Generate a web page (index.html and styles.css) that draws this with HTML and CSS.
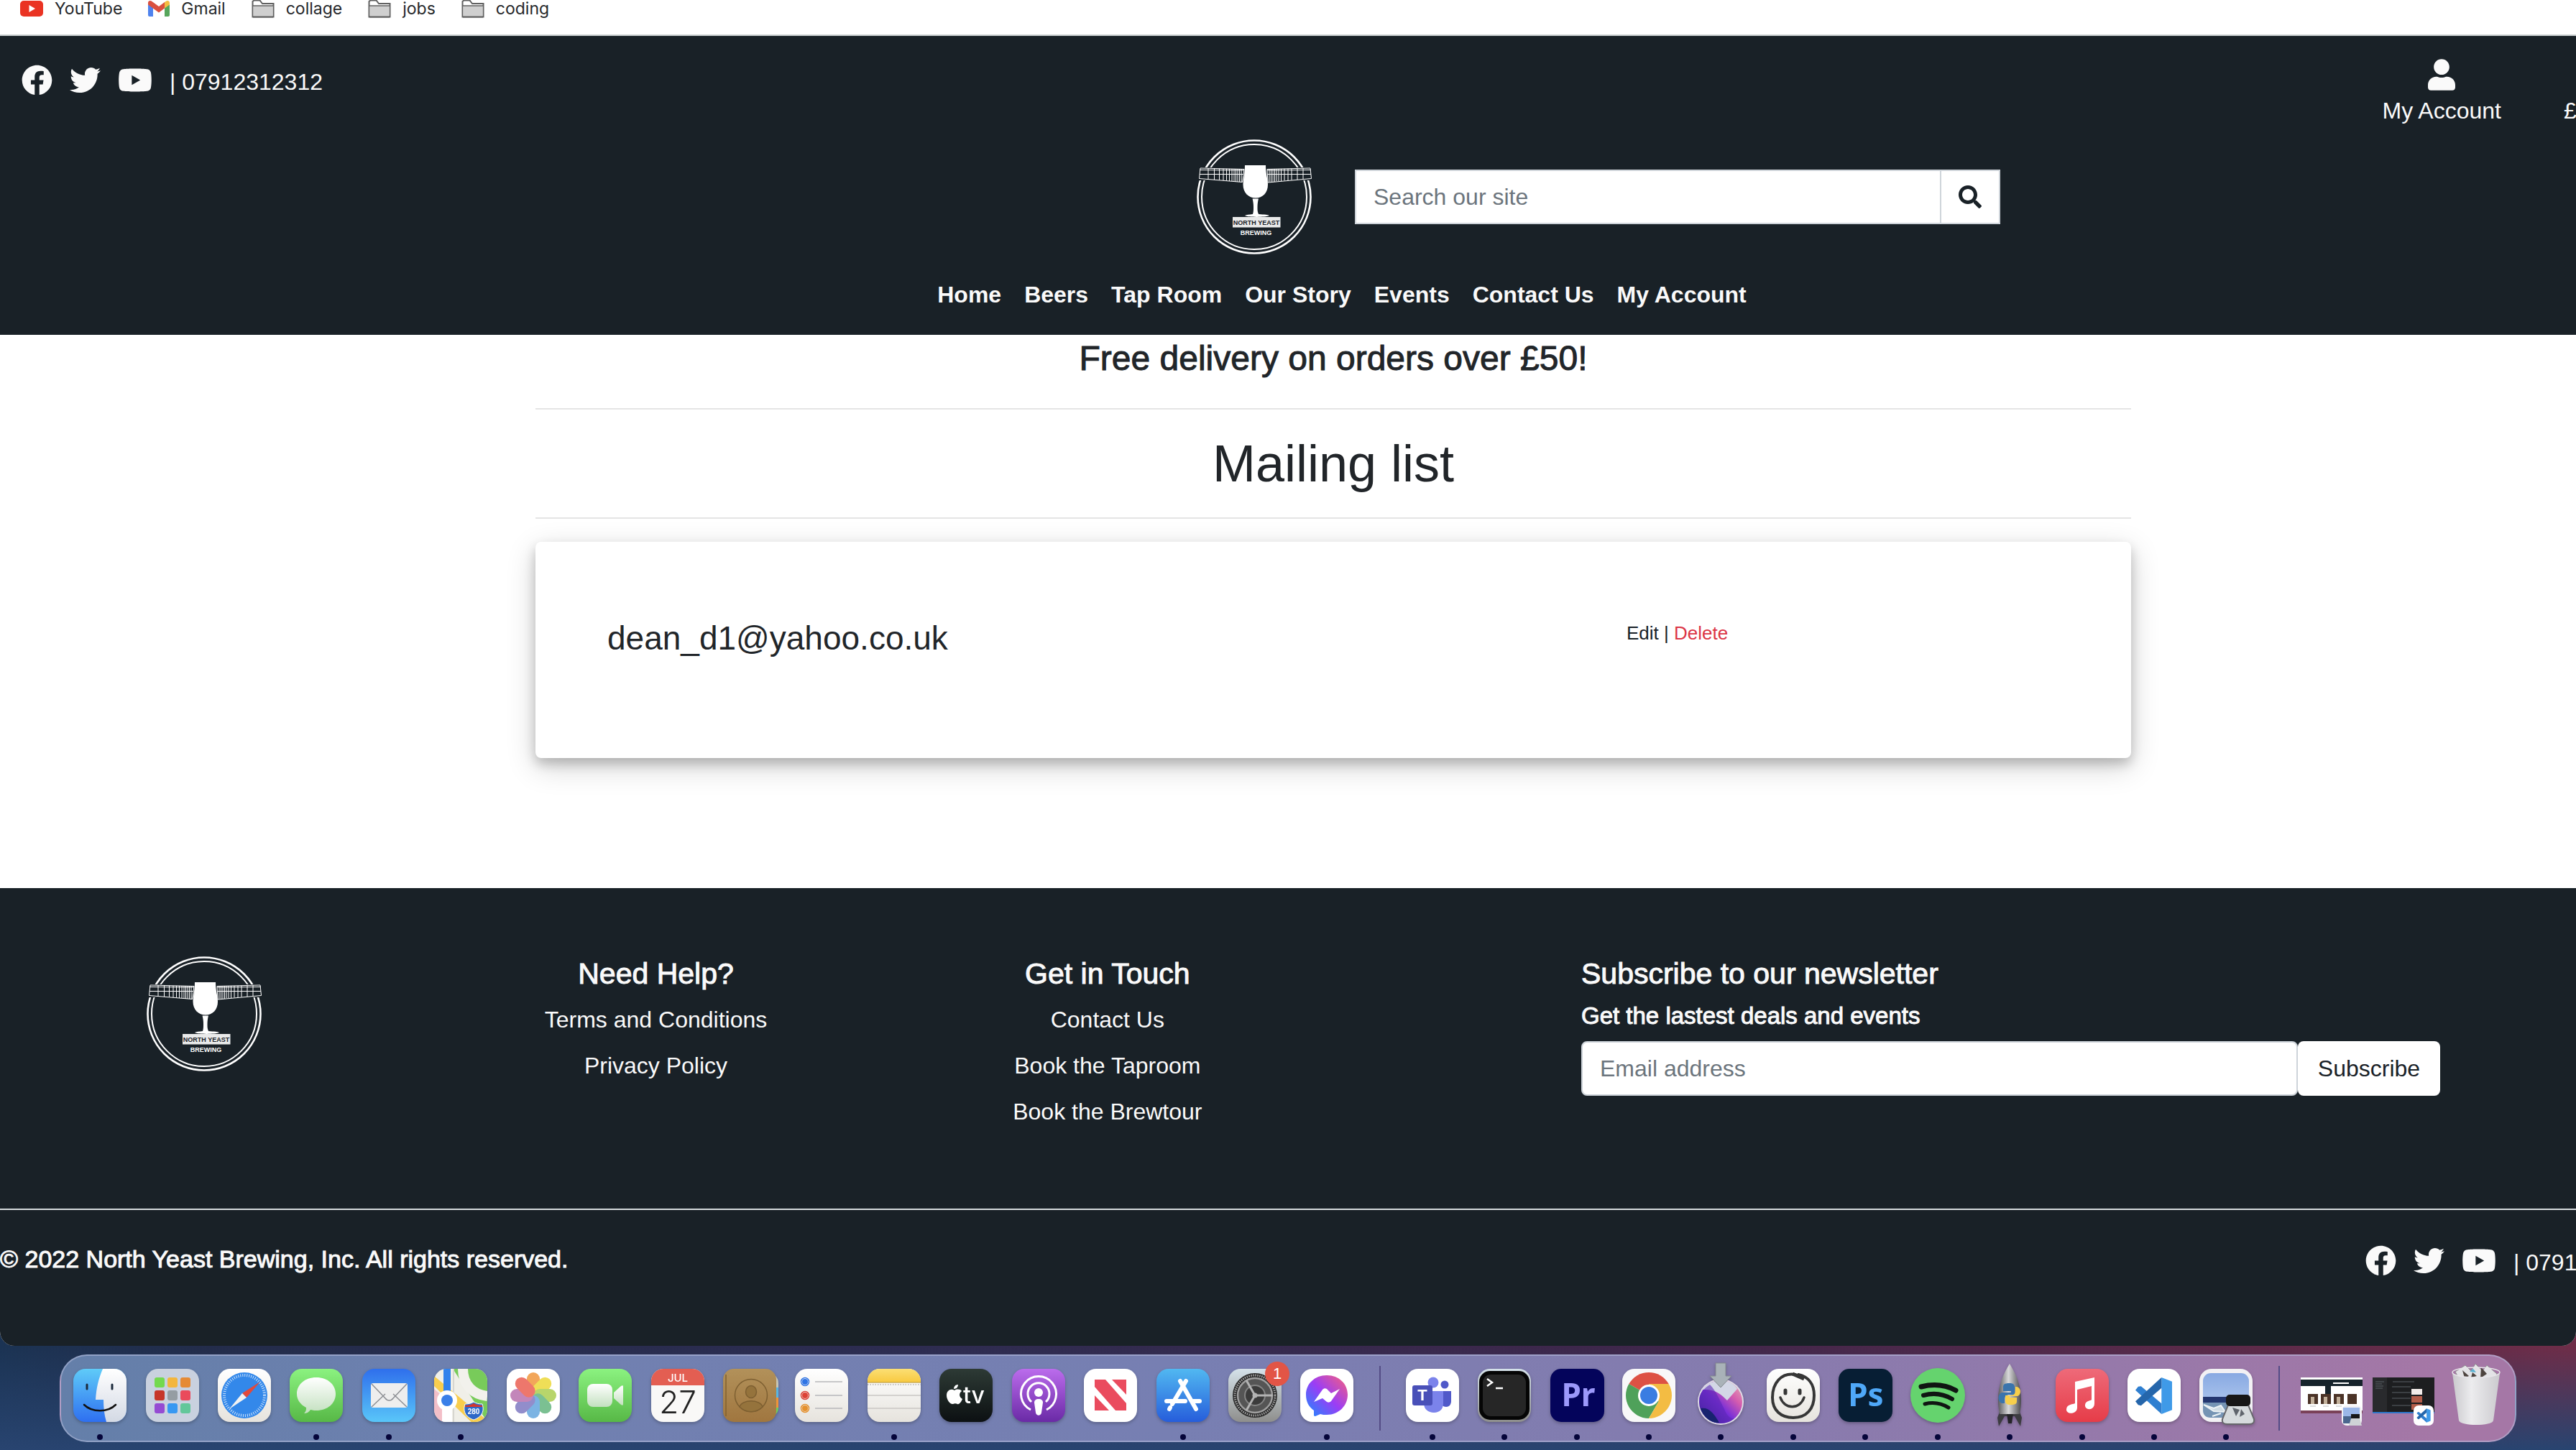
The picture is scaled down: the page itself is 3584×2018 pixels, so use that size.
FILE: index.html
```html
<!DOCTYPE html>
<html lang="en">
<head>
<meta charset="utf-8">
<title>Mailing list - North Yeast Brewing</title>
<link rel="stylesheet" href="styles.css">
</head>
<body>
<svg class="defs" aria-hidden="true">
  <defs>
    <linearGradient id="g-finder" x1="0" y1="0" x2="0" y2="1"><stop offset="0" stop-color="#5fcbf8"/><stop offset="1" stop-color="#2e6ff0"/></linearGradient>
    <linearGradient id="g-light" x1="0" y1="0" x2="0" y2="1"><stop offset="0" stop-color="#ffffff"/><stop offset="1" stop-color="#d3d9e4"/></linearGradient>
    <linearGradient id="g-green" x1="0" y1="0" x2="0" y2="1"><stop offset="0" stop-color="#8bf280"/><stop offset="1" stop-color="#57b846"/></linearGradient>
    <linearGradient id="g-bubble" x1="0" y1="0" x2="0" y2="1"><stop offset="0" stop-color="#ffffff"/><stop offset="1" stop-color="#c3e0bf"/></linearGradient>
    <linearGradient id="g-mail" x1="0" y1="0" x2="0" y2="1"><stop offset="0" stop-color="#2f6fec"/><stop offset="1" stop-color="#59c6f9"/></linearGradient>
    <linearGradient id="g-cream" x1="0" y1="0" x2="0" y2="1"><stop offset="0" stop-color="#ffffff"/><stop offset="1" stop-color="#e6e3dd"/></linearGradient>
    <linearGradient id="g-tan" x1="0" y1="0" x2="0" y2="1"><stop offset="0" stop-color="#b2915a"/><stop offset="1" stop-color="#a0763f"/></linearGradient>
    <linearGradient id="g-yellow" x1="0" y1="0" x2="0" y2="1"><stop offset="0" stop-color="#fbdf74"/><stop offset="1" stop-color="#f8c940"/></linearGradient>
    <linearGradient id="g-tv" x1="0" y1="0" x2="0" y2="1"><stop offset="0" stop-color="#2d3a35"/><stop offset="1" stop-color="#0c1012"/></linearGradient>
    <linearGradient id="g-pod" x1="0" y1="0" x2="0" y2="1"><stop offset="0" stop-color="#bb6cec"/><stop offset="1" stop-color="#6a2aa6"/></linearGradient>
    <linearGradient id="g-store" x1="0" y1="0" x2="0" y2="1"><stop offset="0" stop-color="#51b8f1"/><stop offset="1" stop-color="#265ddb"/></linearGradient>
    <linearGradient id="g-gear" x1="0" y1="0" x2="0" y2="1"><stop offset="0" stop-color="#d5e2ea"/><stop offset="1" stop-color="#8e8e8c"/></linearGradient>
    <linearGradient id="g-msgr" x1="1" y1="0" x2="0" y2="1"><stop offset="0" stop-color="#f9617a"/><stop offset=".5" stop-color="#9b3df5"/><stop offset="1" stop-color="#1a8cff"/></linearGradient>
    <linearGradient id="g-music" x1="0" y1="0" x2="0" y2="1"><stop offset="0" stop-color="#ee6a79"/><stop offset="1" stop-color="#e63c48"/></linearGradient>
    <linearGradient id="g-disc" x1="0" y1="1" x2="1" y2="0"><stop offset="0" stop-color="#1b1e78"/><stop offset=".45" stop-color="#7a2fd8"/><stop offset=".7" stop-color="#d55cae"/><stop offset="1" stop-color="#e7b6b4"/></linearGradient>
    <linearGradient id="g-steel" x1="0" y1="0" x2="1" y2="0"><stop offset="0" stop-color="#5a5a5e"/><stop offset=".45" stop-color="#d9d9da"/><stop offset="1" stop-color="#4a4a4e"/></linearGradient>
    <linearGradient id="g-sky" x1="0" y1="0" x2="0" y2="1"><stop offset="0" stop-color="#88a9e2"/><stop offset="1" stop-color="#bcd2f2"/></linearGradient>
    <linearGradient id="g-bin" x1="0" y1="0" x2="1" y2="0"><stop offset="0" stop-color="#c9c8cc"/><stop offset=".4" stop-color="#ececee"/><stop offset="1" stop-color="#cbcace"/></linearGradient>
    <clipPath id="tile"><rect width="74" height="74" rx="17"/></clipPath>
    <symbol id="i-facebook" viewBox="0 0 512 512"><path d="M504 256C504 119 393 8 256 8S8 119 8 256c0 123.78 90.69 226.38 209.25 245V327.69h-63V256h63v-54.64c0-62.15 37-96.48 93.67-96.48 27.14 0 55.52 4.84 55.52 4.84v61h-31.28c-30.8 0-40.41 19.12-40.41 38.73V256h68.78l-11 71.69h-57.78V501C413.31 482.38 504 379.78 504 256z"/></symbol>
    <symbol id="i-twitter" viewBox="0 0 512 512"><path d="M459.37 151.716c.325 4.548.325 9.097.325 13.645 0 138.72-105.583 298.558-298.558 298.558-59.452 0-114.68-17.219-161.137-47.106 8.447.974 16.568 1.299 25.34 1.299 49.055 0 94.213-16.568 130.274-44.832-46.132-.975-84.792-31.188-98.112-72.772 6.498.974 12.995 1.624 19.818 1.624 9.421 0 18.843-1.3 27.614-3.573-48.081-9.747-84.143-51.98-84.143-102.985v-1.299c13.969 7.797 30.214 12.67 47.431 13.319-28.264-18.843-46.781-51.005-46.781-87.391 0-19.492 5.197-37.36 14.294-52.954 51.655 63.675 129.3 105.258 216.365 109.807-1.624-7.797-2.599-15.918-2.599-24.04 0-57.828 46.782-104.934 104.934-104.934 30.213 0 57.502 12.67 76.67 33.137 23.715-4.548 46.456-13.32 66.599-25.34-7.798 24.366-24.366 44.833-46.132 57.827 21.117-2.273 41.584-8.122 60.426-16.243-14.292 20.791-32.161 39.308-52.628 54.253z"/></symbol>
    <symbol id="i-youtube" viewBox="0 0 576 512"><path d="M549.655 124.083c-6.281-23.65-24.787-42.276-48.284-48.597C458.781 64 288 64 288 64S117.22 64 74.629 75.486c-23.497 6.322-42.003 24.947-48.284 48.597-11.412 42.867-11.412 132.305-11.412 132.305s0 89.438 11.412 132.305c6.281 23.65 24.787 41.5 48.284 47.821C117.22 448 288 448 288 448s170.78 0 213.371-11.486c23.497-6.321 42.003-24.171 48.284-47.821 11.412-42.867 11.412-132.305 11.412-132.305s0-89.438-11.412-132.305zm-317.51 213.508V175.185l142.739 81.205-142.739 81.201z"/></symbol>
    <symbol id="i-folder" viewBox="0 0 32 26"><path d="M1.500 24.500V3l2-1.500h8L15 6h15.500v18.500z" fill="#fff" stroke="#606060" stroke-width="2"/><path d="M2.500 9h27v15h-27z" fill="#cfcfcf"/><path d="M1 9h30" stroke="#606060" stroke-width="1.500"/><path d="M2 24.500h28" stroke="#606060" stroke-width="2"/></symbol>
    <symbol id="i-code" viewBox="0 0 54 54"><path d="M38 1 53 7v40l-15 6z" fill="#3f9ae8"/><path d="M38 1v52L1 19l4-5 4-.500L38 38z" fill="#2f7fd0"/><path d="M38 1v15L9 41l-4-1-4-5z" fill="#2566ab"/></symbol>
    <symbol id="logo" viewBox="0 0 160 160">
      <g fill="none" stroke="#fff"><circle cx="80" cy="80" r="78.500" stroke-width="2.600"/><circle cx="80" cy="80" r="73" stroke-width="2"/></g>
      <path d="M0 39h160v18H0z" fill="#192127"/>
      <g fill="none" stroke="#fff" stroke-width="1">
        <path d="M5 40 66 41.500 63.500 59.500 3.500 54.500zM4 42.500l62 .500M4 48.500h61M16 40v15M24.500 40v16M31.500 41v15.500M37 41v16M41.500 41v16M45.500 41v17M49 41v17M52 41v17M54.500 41v18M57 41v18M59.500 41v18M62 41v18"/>
        <path d="M158 40 98 41.500 99 60 159.500 54.500zM159 42.500l-61 .500M159 48.500H98M148 40v15M140 40v16M132 41v15.500M127 41v16M122 41v16M117.500 41v17M114 41v17M111 41v17M108.500 41v18M106 41v18M103.500 41v18M101 41v18"/>
      </g>
      <path d="M67 36h29c0 12 3 19 3 27 0 11-7 18.500-17 18.500S64.500 74 64.500 63c0-8 2.500-15 2.500-27z" fill="#fff"/>
      <path d="M77.500 82.500h8.500c-1 4-1.500 7-1.500 12 0 4 0 6 1.500 9.500 8 .5 14 1 15 2-6 2.500-29 2.500-34 0 2-1 6-1.500 11-2 1-3 1-6 1-9.500 0-5-.5-8-1.500-12z" fill="#fff"/>
      <path d="M50 108h66.500v14.500H50z" fill="#e9eaea"/>
      <text class="logo-line" x="83" y="118.500" fill="#192127">NORTH YEAST</text>
      <text class="logo-line" x="82.500" y="133" fill="#fff">BREWING</text>
    </symbol>
  </defs>
</svg>

<div class="window">
  <nav class="bookmarks" aria-label="Bookmarks">
    <a href="#"><svg width="32" height="22" viewBox="0 0 32 22"><rect width="32" height="22" rx="5" fill="#ea3323"/><path d="M12.500 6v10l8.500-5z" fill="#fff"/></svg>YouTube</a>
    <a href="#"><svg width="30" height="22" viewBox="0 0 30 22"><path d="M0 3v17a2 2 0 0 0 2 2h5V8z" fill="#4f83ee"/><path d="M30 3v17a2 2 0 0 1-2 2h-5V8z" fill="#57a65c"/><path d="M30 3c0-3-3-4-5.500-2L23 2v8.500l7-5z" fill="#f3bd42"/><path d="M0 3c0-3 3-4 5.500-2L15 8l8-6v8.500L15 16.500 0 5.500z" fill="#d9503f"/></svg>Gmail</a>
    <a href="#"><svg width="32" height="26"><use href="#i-folder"/></svg>collage</a>
    <a href="#"><svg width="32" height="26"><use href="#i-folder"/></svg>jobs</a>
    <a href="#"><svg width="32" height="26"><use href="#i-folder"/></svg>coding</a>
  </nav>

  <div class="page">
    <header class="site-header">
      <div class="top-row">
        <div class="social">
          <a href="#" aria-label="Facebook"><svg width="43" height="43"><use href="#i-facebook"/></svg></a>
          <a href="#" aria-label="Twitter"><svg width="43" height="43"><use href="#i-twitter"/></svg></a>
          <a href="#" aria-label="YouTube"><svg width="48" height="43"><use href="#i-youtube"/></svg></a>
          <span>| 07912312312</span>
        </div>
        <div class="account">
          <a href="#"><svg width="38" height="44" viewBox="0 0 448 512"><path d="M224 256c70.7 0 128-57.3 128-128S294.7 0 224 0 96 57.3 96 128s57.3 128 128 128zm89.6 32h-16.7c-22.2 10.2-46.9 16-72.9 16s-50.6-5.800-72.9-16h-16.7C60.2 288 0 348.2 0 422.4V464c0 26.5 21.5 48 48 48h352c26.5 0 48-21.5 48-48v-41.600c0-74.200-60.200-134.400-134.400-134.400z"/></svg>My Account</a>
          <a href="#">£0.00</a>
        </div>
      </div>
      <div class="brand-row">
        <a class="brand" href="#" aria-label="North Yeast Brewing"><svg width="160" height="160"><use href="#logo"/></svg></a>
        <form class="search">
          <input type="search" placeholder="Search our site" aria-label="Search our site">
          <button type="submit" aria-label="Search"><svg width="32" height="32" viewBox="0 0 512 512"><path d="M505 442.700L405.300 343c-4.500-4.500-10.600-7-17-7H372c27.600-35.300 44-79.700 44-128C416 93.100 322.900 0 208 0S0 93.100 0 208s93.100 208 208 208c48.300 0 92.700-16.400 128-44v16.300c0 6.400 2.500 12.500 7 17l99.700 99.700c9.400 9.400 24.600 9.400 33.900 0l28.300-28.300c9.400-9.400 9.400-24.600.1-34zM208 336c-70.700 0-128-57.200-128-128 0-70.700 57.200-128 128-128 70.700 0 128 57.200 128 128 0 70.700-57.200 128-128 128z"/></svg></button>
        </form>
      </div>
      <nav class="main-nav" aria-label="Main">
        <a href="#">Home</a><a href="#">Beers</a><a href="#">Tap Room</a><a href="#">Our Story</a><a href="#">Events</a><a href="#">Contact Us</a><a href="#">My Account</a>
      </nav>
    </header>

    <main class="content">
      <p class="delivery">Free delivery on orders over £50!</p>
      <hr>
      <h1>Mailing list</h1>
      <hr>
      <article class="card">
        <h2>dean_d1@yahoo.co.uk</h2>
        <p class="actions"><a href="#">Edit</a> | <a class="danger" href="#">Delete</a></p>
      </article>
    </main>

    <footer class="site-footer">
      <div class="footer-row">
        <div class="footer-col"><svg width="160" height="160" role="img" aria-label="North Yeast Brewing"><use href="#logo"/></svg></div>
        <div class="footer-col">
          <h3>Need Help?</h3>
          <a href="#">Terms and Conditions</a>
          <a href="#">Privacy Policy</a>
        </div>
        <div class="footer-col">
          <h3>Get in Touch</h3>
          <a href="#">Contact Us</a>
          <a href="#">Book the Taproom</a>
          <a href="#">Book the Brewtour</a>
        </div>
        <form class="newsletter">
          <h3>Subscribe to our newsletter</h3>
          <label for="email">Get the lastest deals and events</label>
          <div class="field"><input id="email" type="email" placeholder="Email address"><button type="submit">Subscribe</button></div>
        </form>
      </div>
      <div class="legal">
        <p>© 2022 North Yeast Brewing, Inc. All rights reserved.</p>
        <div class="social">
          <a href="#" aria-label="Facebook"><svg width="43" height="43"><use href="#i-facebook"/></svg></a>
          <a href="#" aria-label="Twitter"><svg width="43" height="43"><use href="#i-twitter"/></svg></a>
          <a href="#" aria-label="YouTube"><svg width="48" height="43"><use href="#i-youtube"/></svg></a>
          <span>| 07912312312</span>
        </div>
      </div>
    </footer>
  </div>
</div>

<nav class="dock" aria-label="Dock">
  <button class="app open" aria-label="Finder"><svg viewBox="0 0 74 74"><g clip-path="url(#tile)"><rect width="74" height="74" fill="url(#g-finder)"/><path d="M41 0c-6 14-9 27-10 43h11c0 11 1 21 4 31h28V0z" fill="url(#g-light)"/></g><path d="M19 22v6M54 22v6" stroke="#1c2b3c" stroke-width="3" stroke-linecap="round"/><path d="M15 50c11 11 33 11 44 0" fill="none" stroke="#111" stroke-width="2.500" stroke-linecap="round"/></svg></button>
  <button class="app" aria-label="Launchpad"><svg viewBox="0 0 74 74"><rect width="74" height="74" rx="17" fill="#c9d1df"/><rect x="12" y="12" width="14" height="14" rx="3" fill="#73d94f"/><rect x="30" y="12" width="14" height="14" rx="3" fill="#f3b63e"/><rect x="48" y="12" width="14" height="14" rx="3" fill="#e58a35"/><rect x="12" y="30" width="14" height="14" rx="3" fill="#c63529"/><rect x="30" y="30" width="14" height="14" rx="3" fill="#959da3"/><rect x="48" y="30" width="14" height="14" rx="3" fill="#ea4b5c"/><rect x="12" y="48" width="14" height="14" rx="3" fill="#954bd3"/><rect x="30" y="48" width="14" height="14" rx="3" fill="#3798f2"/><rect x="48" y="48" width="14" height="14" rx="3" fill="#62c79a"/></svg></button>
  <button class="app" aria-label="Safari"><svg viewBox="0 0 74 74"><rect width="74" height="74" rx="17" fill="url(#g-cream)"/><circle cx="37" cy="37" r="32" fill="#3388ea"/><circle cx="37" cy="37" r="28" fill="none" stroke="#cfe4fb" stroke-width="4" stroke-dasharray="1 2"/><path d="M59 18 40 40l-6-6z" fill="#e2493b"/><path d="M16 56l18-22 6 6z" fill="#f2f2f2"/></svg></button>
  <button class="app open" aria-label="Messages"><svg viewBox="0 0 74 74"><rect width="74" height="74" rx="17" fill="url(#g-green)"/><path d="M37 12c16 0 27 10 27 23S53 58 37 58c-3 0-6-.5-8-1-2 3-5 5-9 5 3-3 3-5 3-8-8-4-13-11-13-19 0-13 11-23 27-23z" fill="url(#g-bubble)"/></svg></button>
  <button class="app open" aria-label="Mail"><svg viewBox="0 0 74 74"><rect width="74" height="74" rx="17" fill="url(#g-mail)"/><rect x="12" y="20" width="51" height="34" rx="3" fill="#eee"/><path d="M13 53l19-18M62 53 43 35M13 21l19 20c3 4 8 4 11 0l19-20" fill="none" stroke="#8d8f94" stroke-width="1.500"/></svg></button>
  <button class="app open" aria-label="Maps"><svg viewBox="0 0 74 74"><g clip-path="url(#tile)"><rect width="74" height="74" fill="#f0efe8"/><path d="M26 0h48v74z" fill="#78cb5a"/><path d="M0 10 74 72v12H62L0 24z" fill="#f8cd4d"/><path d="M0 28 14 40v34H0z" fill="#f3bfc8"/><path d="M40 0c0 22 14 36 34 38" fill="none" stroke="#f2f1ec" stroke-width="14"/><path d="M27 0v74" stroke="#d7d6d0" stroke-width="2"/><path d="M18 0v40" stroke="#3182ec" stroke-width="10"/><path d="M18 50v24" stroke="#fff" stroke-width="14"/><circle cx="18" cy="44" r="14" fill="#fff"/><circle cx="18" cy="44" r="8" fill="#3a7fe8"/><path d="M43 49c5 0 9-1 12-3 3 2 7 3 12 3 4 12-3 19-12 22-9-3-16-10-12-22z" fill="#2c68c8" stroke="#fff"/><path d="M43 51c5 0 9-1 12-3 3 2 7 3 12 3v2H43z" fill="#d4362e"/></g><text class="t-shield" x="55" y="63">280</text></svg></button>
  <button class="app" aria-label="Photos"><svg viewBox="0 0 74 74"><rect width="74" height="74" rx="17" fill="#fff"/><g opacity=".82"><rect x="28" y="5" width="18" height="32" rx="9" fill="#f09336"/><rect x="28" y="5" width="18" height="32" rx="9" fill="#ecd733" transform="rotate(45 37 37)"/><rect x="28" y="5" width="18" height="32" rx="9" fill="#a9cd4b" transform="rotate(90 37 37)"/><rect x="28" y="5" width="18" height="32" rx="9" fill="#5fb37b" transform="rotate(135 37 37)"/><rect x="28" y="5" width="18" height="32" rx="9" fill="#5fa3dd" transform="rotate(180 37 37)"/><rect x="28" y="5" width="18" height="32" rx="9" fill="#7b75c0" transform="rotate(225 37 37)"/><rect x="28" y="5" width="18" height="32" rx="9" fill="#b76cab" transform="rotate(270 37 37)"/><rect x="28" y="5" width="18" height="32" rx="9" fill="#ea5a4d" transform="rotate(315 37 37)"/></g></svg></button>
  <button class="app" aria-label="FaceTime"><svg viewBox="0 0 74 74"><rect width="74" height="74" rx="17" fill="url(#g-green)"/><rect x="12" y="21" width="35" height="32" rx="8" fill="url(#g-bubble)"/><path d="M49 33l10-9c2-1 3-1 3 1v24c0 2-1 2-3 1l-10-9z" fill="url(#g-bubble)"/></svg></button>
  <button class="app" aria-label="Calendar"><svg viewBox="0 0 74 74"><g clip-path="url(#tile)"><rect width="74" height="74" fill="#f9f8f7"/><rect width="74" height="23" fill="#e35e52"/></g><text class="t-month" x="37" y="18">JUL</text><text class="t-day" x="37" y="62">27</text></svg></button>
  <button class="app" aria-label="Contacts"><svg viewBox="0 0 74 74"><path d="M70 10h3q4 4 4 10v8h-7z" fill="#c7c5b5"/><path d="M70 26h7v14h-7z" fill="#58b5e2"/><path d="M70 40h7v14h-7z" fill="#ee9439"/><path d="M70 54h7q0 8-7 11z" fill="#6fcf5d"/><rect width="74" height="74" rx="15" fill="url(#g-tan)"/><path d="M4 8v58" stroke="#80602f" stroke-width="1.500"/><g fill="#95733c" stroke="#7d5f31" stroke-width="1.500"><circle cx="39" cy="37" r="22.500" fill="none"/><ellipse cx="39" cy="32" rx="7.500" ry="8.500"/><path d="M23 53c3-11 29-11 32 0-9 9-23 9-32 0z"/></g></svg></button>
  <button class="app" aria-label="Reminders"><svg viewBox="0 0 74 74"><rect width="74" height="74" rx="17" fill="url(#g-cream)"/><path d="M28 18h38M28 37h38M28 55h38" stroke="#b6b6ba" stroke-width="1.500"/><g stroke-width="1.500" fill="none"><circle cx="14" cy="18" r="5.500" stroke="#2f74e4"/><circle cx="14" cy="37" r="5.500" stroke="#dc4237"/><circle cx="14" cy="55" r="5.500" stroke="#e4912f"/></g><circle cx="14" cy="18" r="4" fill="#2f74e4"/><circle cx="14" cy="37" r="4" fill="#dc4237"/><circle cx="14" cy="55" r="4" fill="#e4912f"/></svg></button>
  <button class="app open" aria-label="Notes"><svg viewBox="0 0 74 74"><g clip-path="url(#tile)"><rect width="74" height="74" fill="url(#g-cream)"/><rect width="74" height="19" fill="url(#g-yellow)"/><path d="M0 19h74" stroke="#b79535"/><path d="M0 22h74" stroke="#b3b0ab" stroke-width="1.500" stroke-dasharray="1.500 2"/><path d="M0 37h74M0 55h74" stroke="#c9c6c3" stroke-width="1.500"/></g></svg></button>
  <button class="app" aria-label="Apple TV"><svg viewBox="0 0 74 74"><rect width="74" height="74" rx="17" fill="url(#g-tv)"/><path d="M21 30c3-2 8-2 10 1-4 3-4 8 1 11-2 5-5 8-7 7-2-1-4-1-6 0-4 1-9-6-9-12 0-7 6-10 11-7zM20 28c0-3 2-6 6-6 0 3-2 6-6 6z" fill="#fff"/><text class="t-tv" x="48" y="48">tv</text></svg></button>
  <button class="app" aria-label="Podcasts"><svg viewBox="0 0 74 74"><rect width="74" height="74" rx="17" fill="url(#g-pod)"/><g fill="none" stroke="#fff" stroke-width="3"><path d="M26 57a24.500 24.500 0 1 1 22 0"/><path d="M27 46a15 15 0 1 1 20 0"/></g><circle cx="37" cy="33" r="6" fill="#fff"/><path d="M37 42c4 0 6 2 6 5l-2 14c-1 5-7 5-8 0l-2-14c0-3 2-5 6-5z" fill="#fff"/></svg></button>
  <button class="app" aria-label="News"><svg viewBox="0 0 74 74"><rect width="74" height="74" rx="17" fill="#fff"/><path d="M15 15h15l29 33v10H44L15 25z" fill="#ea4b5e"/><path d="M39 15h20v21zM15 37v21h20z" fill="#ea4b5e"/></svg></button>
  <button class="app open" aria-label="App Store"><svg viewBox="0 0 74 74"><rect width="74" height="74" rx="17" fill="url(#g-store)"/><g stroke="#fff" stroke-width="6" stroke-linecap="round"><path d="M41 17 22 49M33 17l22 39M14 45h26M50 45h10M19 54l-1 2"/></g></svg></button>
  <button class="app" aria-label="System Preferences, 1 update"><svg viewBox="0 0 74 74"><rect width="74" height="74" rx="17" fill="url(#g-gear)"/><circle cx="37" cy="37" r="31" fill="#292929"/><circle cx="37" cy="37" r="28" fill="none" stroke="#a3a3a3" stroke-width="3" stroke-dasharray="1.500 1.500"/><circle cx="37" cy="37" r="24" fill="#555" stroke="#a0a0a0" stroke-width="2.500"/><circle cx="37" cy="37" r="14" fill="#3b3b3b" stroke="#858585" stroke-width="2"/><path d="M37 37h25M37 37 25 16M37 37 25 58" stroke="#b3b3b3" stroke-width="3"/><circle cx="37" cy="37" r="3.500" fill="#b3b3b3"/></svg><span class="badge">1</span></button>
  <button class="app open" aria-label="Messenger"><svg viewBox="0 0 74 74"><rect width="74" height="74" rx="17" fill="#fff"/><path d="M37 9c17 0 29 12 29 27S54 64 37 64c-4 0-6 0-9-1l-7 3c-2 0-2-1-2-2v-6C12 53 8 46 8 36 8 21 20 9 37 9z" fill="url(#g-msgr)"/><path d="M19 46 31 29c2-2 4-2 6-1l6 6 12-6-12 17c-2 2-4 2-6 1l-6-5z" fill="#fff"/></svg></button>
  <span class="divider"></span>
  <button class="app open" aria-label="Teams"><svg viewBox="0 0 74 74"><rect width="74" height="74" rx="17" fill="#fff"/><circle cx="38" cy="19" r="7.500" fill="#7b83eb"/><circle cx="54" cy="22" r="5.500" fill="#5059c9"/><path d="M48 31h15v14c0 5-3 8-7 8s-8-3-8-8z" fill="#5059c9"/><path d="M25 31h27v17c0 8-5 13-13 13S25 56 25 48z" fill="#7b83eb"/><rect x="9" y="23" width="28" height="28" rx="3" fill="#4950b8"/><text class="t-teams" x="23" y="44">T</text></svg></button>
  <button class="app open" aria-label="Terminal"><svg viewBox="0 0 74 74"><rect width="74" height="74" rx="17" fill="url(#g-gear)"/><rect x="2" y="3" width="70" height="68" rx="15" fill="#050505"/><rect x="7" y="8" width="60" height="58" rx="11" fill="#262626"/><path d="M13 14l7 5-7 5M25 27h10" fill="none" stroke="#fff" stroke-width="2.500"/></svg></button>
  <button class="app open" aria-label="Premiere Pro"><svg viewBox="0 0 74 74"><rect width="75" height="74" rx="15" fill="#04045b"/><text class="t-adobe" x="39" y="52" fill="#9c99fb">Pr</text></svg></button>
  <button class="app open" aria-label="Chrome"><svg viewBox="0 0 74 74"><rect width="74" height="74" rx="17" fill="#f8f8f9"/><path d="M37 37 9.300 21A32 32 0 0 1 64.700 21z" fill="#dd5144"/><path d="M37 37 9.300 21A32 32 0 0 0 37 69l14-24z" fill="#4fa15a"/><path d="M64.700 21H37v16l14 8-14 24A32 32 0 0 0 64.700 21z" fill="#f3bc43"/><circle cx="37" cy="37" r="15" fill="#fff"/><circle cx="37" cy="37" r="12" fill="#3a7de2"/></svg></button>
  <button class="app open" aria-label="macOS installer"><svg viewBox="0 0 74 74"><circle cx="37" cy="46" r="32" fill="#dedbe6"/><circle cx="37" cy="46" r="30" fill="url(#g-disc)"/><path d="M12 29c9-14 33-18 46-4l2 3-14 16c-8-8-16-16-34-15z" fill="#d3d7e6"/><path d="M22 22c8 8 14 22 20 34 3 8 8 14 14 13-8 8-24 10-35 2S5 48 8 37c4-8 9-12 14-15z" fill="#5b27b5" opacity=".6"/><path d="M9 55c10-2 17 4 26 20-12 1-22-8-26-20z" fill="#17236e"/><path d="M30-8h14v18h8L37 26 22 10h8z" fill="#a9b2b8" stroke="#83898e"/></svg></button>
  <button class="app open" aria-label="Balsamiq"><svg viewBox="0 0 74 74"><rect width="74" height="74" rx="17" fill="url(#g-cream)"/><path d="M40 8C20 5 8 20 8 40c0 18 12 28 29 28 19 0 29-13 29-31 0-16-8-26-22-29" fill="none" stroke="#363636" stroke-width="4" stroke-linecap="round"/><path d="M36 7l16 7" stroke="#363636" stroke-width="5"/><path d="M26 30v4M46 30v4" stroke="#363636" stroke-width="5" stroke-linecap="round"/><path d="M19 40c6 17 27 17 33 0" fill="none" stroke="#363636" stroke-width="3.500" stroke-linecap="round"/></svg></button>
  <button class="app open" aria-label="Photoshop"><svg viewBox="0 0 74 74"><rect width="75" height="74" rx="15" fill="#071e34"/><text class="t-adobe" x="38" y="52" fill="#4fa8f8">Ps</text></svg></button>
  <button class="app open" aria-label="Spotify"><svg viewBox="0 0 74 74"><circle cx="37" cy="37" r="38" fill="#65d36e"/><g fill="none" stroke="#101512" stroke-linecap="round"><path d="M14 25c16-4 33-3 48 5" stroke-width="7"/><path d="M17 37c14-4 28-2 40 5" stroke-width="6"/><path d="M19 49c12-3 23-1 33 5" stroke-width="5"/></g></svg></button>
  <button class="app open" aria-label="Python launcher"><svg viewBox="0 0 74 74"><path d="M26 52 20 68l2 12 8-14h14l8 14 2-12-6-16z" fill="#3c3c40"/><path d="M33 62h9l-2 14h-5z" fill="#242428"/><path d="M37-7c12 19 20 40 14 70H23c-6-30 2-51 14-70z" fill="url(#g-steel)"/><path d="M37 20c-8 0-9 2-9 6v5h11v2H26c-6 2-6 13 0 15h4v-6c0-4 3-6 7-6h7V26c0-4-2-6-7-6z" fill="#3a74ac"/><path d="M38 50c8 0 9-2 9-5v-5H37v-2h11c6-2 5-12-1-13h-2v6c0 4-3 6-7 6h-7v8c0 3 2 5 7 5z" fill="#f6cf4b"/></svg></button>
  <button class="app open" aria-label="Music"><svg viewBox="0 0 74 74"><rect width="74" height="74" rx="17" fill="url(#g-music)"/><path d="M27 18l27-6v36c0 11-14 10-13 2 1-6 7-5 9-7V24l-20 5v25c0 10-16 10-15 2 1-7 8-6 12-8z" fill="#fff"/></svg></button>
  <button class="app open" aria-label="Visual Studio Code"><svg viewBox="0 0 74 74"><rect width="74" height="74" rx="17" fill="#fff"/><use href="#i-code" x="10" y="11" width="53" height="53"/></svg></button>
  <button class="app open" aria-label="Preview"><svg viewBox="0 0 74 74"><rect width="74" height="74" rx="17" fill="#f2f1f4"/><rect x="5" y="6" width="64" height="62" rx="11" fill="url(#g-sky)"/><path d="M5 39h64v10H5z" fill="#23366f"/><path d="M5 47h64v10q0 11-11 11H16Q5 68 5 57z" fill="#7594b4"/><path d="M6 50l14 5 10-4 6 9-16-1zM18 66l12-4" stroke="#edf3f6" stroke-width="2" fill="#cfdbe3"/><path d="M41 48h26l9 22c1 5-2 7-7 7H39c-5 0-8-2-7-7z" fill="#d6dbdd" stroke="#67686c" stroke-width="2"/><path d="M46 54l10 3-5 9zM58 56l5 7-7 4z" fill="#5f656c"/><rect x="37" y="36" width="34" height="16" rx="5" fill="#171717"/></svg></button>
  <span class="divider"></span>
  <button class="thumb" aria-label="Minimised browser window"><svg viewBox="0 0 86 74"><rect y="12" width="86" height="50" fill="#fff"/><path d="M0 15h86v9H0z" fill="#16232b"/><path d="M34 24h8v11h-8z" fill="#16232b"/><path d="M45 19h22v2H45z" fill="#fff"/><path d="M10 35h14v14H10zM28 35h14v14H28zM46 35h14v14H46zM65 35h13v14H65z" fill="#4b3327"/><path d="M14 39h5v10h-5zM32 39h5v10h-5zM50 39h5v10h-5z" fill="#c2b09a"/><path d="M13 52h8M31 52h8M49 52h8" stroke="#bbb"/><path d="M0 58h86v4H0z" fill="#7a4158"/><rect x="57" y="51" width="28" height="28" rx="7" fill="#f2f1f4"/><path d="M59 54h23v13H59z" fill="#9bb7e8"/><path d="M59 66h23v10H59z" fill="#4a668e"/><path d="M71 66h10l4 13H67z" fill="#cfd3d6"/><path d="M70 63h12v6H70z" fill="#171717"/></svg></button>
  <button class="thumb" aria-label="Minimised editor window"><svg viewBox="0 0 86 74"><rect y="12" width="86" height="50" fill="#1d1e20"/><path d="M0 12h20v48H0z" fill="#292a2d"/><path d="M4 18h12M4 21h9M4 24h11M4 27h10M28 18h30M27 25h26M27 33h26M27 41h26M27 51h26" stroke="#5b6066"/><path d="M54 28h15v8H54z" fill="#f3ecea"/><path d="M54 38h15v9H54zM54 49h15v8H54z" fill="#b35d4a"/><path d="M0 60h86v2H0z" fill="#2c76c9"/><rect x="57" y="51" width="28" height="28" rx="7" fill="#fff"/><use href="#i-code" x="61" y="55" width="20" height="20"/></svg></button>
  <button class="thumb" aria-label="Bin"><svg viewBox="0 0 86 74"><path d="M14 4 28-5l8 8 6-10 10 10 6-8 14 12-8 12H22z" fill="#e3e3e6" stroke="#8f8b90"/><path d="M24 2l9 8-6 3zM50-2l8 9-9 6zM38 5l6 5-8 2z" fill="#4d443f"/><path d="M34 4l5-4 4 5z" fill="#58b2d2"/><path d="M10 6c10 8 56 8 66 0l-9 66c-2 8-45 8-48 0z" fill="url(#g-bin)"/><ellipse cx="43" cy="5" rx="33" ry="7" fill="none" stroke="#e8e6ea" stroke-width="1.500"/></svg></button>
</nav>
</body>
</html>
```
FILE: styles.css
```css
* { box-sizing: border-box; }

body {
  margin: 0;
  min-height: 100vh;
  display: flex;
  flex-direction: column;
  overflow-x: hidden;
  font: 32px/48px "Liberation Sans", Arial, sans-serif;
  color: #212529;
  background:
    linear-gradient(to top, #284470 0, rgba(40, 68, 112, 0) 144px),
    linear-gradient(to right, #1b3353 0, #232c4a 8%, #2d2c50 35%, #40264a 65%, #6e2d48 100%);
}

a { color: inherit; text-decoration: none; }
h1, h2, h3, p { margin: 0; font-weight: 400; }
svg { display: block; overflow: visible; }
button { font: inherit; cursor: pointer; }
.defs { position: absolute; width: 0; height: 0; }

.window {
  overflow: hidden;
  border-radius: 0 0 20px 20px;
  background: #fff;
}

/* Bookmarks bar */
.bookmarks {
  display: flex;
  gap: 36px;
  height: 50px;
  padding-left: 28px;
  border-bottom: 2px solid #c9cfd0;
  font: 23px/24px Inter, sans-serif;
  color: #26282b;
}
.bookmarks a { display: flex; align-items: center; gap: 16px; height: 24px; }

/* The page is slightly wider than the window that shows it */
.page { width: calc(100% + 126px); }

/* Header */
.site-header {
  padding-bottom: 32px;
  color: #fafafa;
  background: #192127;
}
.top-row { display: flex; justify-content: space-between; padding: 32px 63px 16px 30px; }
.social { display: flex; align-items: flex-start; gap: 24px; }
.top-row .social { padding-top: 8px; }
.social svg, .account svg { fill: #fafafa; }
.account { display: flex; align-items: flex-end; gap: 87px; }
.account a { display: flex; flex-direction: column; align-items: center; gap: 4px; }

.brand-row { display: grid; grid-template-columns: 1fr 1fr; align-items: center; }
.brand { justify-self: end; padding-right: 30px; }
.logo-line { font: bold 9px "Liberation Sans", sans-serif; text-anchor: middle; }
.search { display: flex; width: 50%; height: 76px; padding-left: 30px; }
.search input {
  flex: 1;
  min-width: 0;
  padding: 0 24px;
  border: 2px solid #ced4da;
  border-right: 0;
  border-radius: 0;
  font: inherit;
  background: #fff;
}
.search button {
  display: grid;
  place-items: center;
  width: 84px;
  padding: 0;
  border: 2px solid #ced4da;
  background: #fff;
}
.search svg { fill: #192127; }
input::placeholder { color: #6c757d; opacity: 1; }

.main-nav {
  display: flex;
  justify-content: center;
  gap: 32px;
  padding: 32px 0 0 24px;
  font-weight: 700;
}

/* Main content */
.content { max-width: 2220px; margin: 0 auto; padding: 4px 0 181px; text-align: center; }
.delivery { margin-bottom: 40px; font-size: 48px; line-height: 58px; -webkit-text-stroke: 1px; }
hr { height: 2px; margin: 32px 0; border: 0; background: #e5e5e5; }
h1 { font-size: 72px; line-height: 86px; }
.card {
  display: grid;
  grid-template-columns: 1418fr 602fr;
  min-height: 301px;
  padding: 106px 100px;
  border-radius: 8px;
  text-align: left;
  background: #fff;
  box-shadow: 0 8px 16px rgba(0, 0, 0, .2), 0 12px 40px rgba(0, 0, 0, .19);
}
.card h2 { font-size: 46px; line-height: 56px; }
.actions { font-size: 26px; line-height: 42px; color: #192127; }
.danger { color: #dc3545; }

/* Footer */
.site-footer { color: #fafafa; background: #192127; }
.footer-row {
  display: grid;
  grid-template-columns: 1fr 1fr 1fr minmax(0, 3fr);
  margin: 0 -30px;
  padding: 95px 0 111px;
  border-bottom: 2px solid #d5dadd;
}
.footer-col { display: flex; flex-direction: column; align-items: center; gap: 16px; }
.site-footer h3 { font-size: 41px; line-height: 48px; -webkit-text-stroke: 1px; }
.newsletter { display: flex; flex-direction: column; gap: 16px; padding: 0 345px; }
.newsletter label, .legal p { font-size: 33px; line-height: 38px; -webkit-text-stroke: 1px; }
.legal p { font-size: 34px; }
.field { display: flex; height: 76px; }
.field input {
  flex: 1;
  min-width: 0;
  padding: 0 24px;
  border: 2px solid #ced4da;
  border-radius: 8px;
  font: inherit;
  background: #fff;
}
.field button { width: 198px; padding: 0; border: 0; border-radius: 8px; color: #192127; background: #fff; }
.legal { display: flex; justify-content: space-between; padding: 49px 0 92px; }

/* Dock */
.dock {
  display: flex;
  height: 122px;
  margin: 12px 83px 10px;
  padding: 0 4px;
  border: 2px solid rgba(190, 196, 226, .5);
  border-radius: 38px;
  background: linear-gradient(to right, #647fa9, #7080b0 20%, #777fb2 45%, #877bae 70%, #a577a6 97%);
}
.app, .thumb {
  position: relative;
  flex: 1 1 0;
  display: flex;
  flex-direction: column;
  align-items: center;
  gap: 17px;
  padding: 18px 0 0;
  border: 0;
  background: none;
}
.app svg { width: 74px; height: 74px; filter: drop-shadow(0 2px 2px rgba(0, 0, 0, .25)); }
.thumb svg { width: 86px; height: 74px; }
.open::after { content: ""; width: 8px; height: 8px; border-radius: 50%; background: #05053a; }
.divider { width: 2px; height: 90px; margin: 14px 22px; background: #544c86; }
.badge {
  position: absolute;
  top: 8px;
  right: 2px;
  width: 34px;
  height: 34px;
  border-radius: 50%;
  font-size: 22px;
  line-height: 34px;
  color: #fff;
  background: #e25546;
}

.dock text { text-anchor: middle; }
.t-shield { font: bold 10px "Liberation Sans", sans-serif; fill: #fff; }
.t-month { font: 500 15px Inter, sans-serif; fill: #fff; }
.t-day { font: 300 44px Inter, sans-serif; fill: #222; }
.t-tv { font: 500 32px Inter, sans-serif; fill: #fff; }
.t-teams { font: bold 22px "Liberation Sans", sans-serif; fill: #fff; }
.t-adobe { font: bold 44px "Noto Sans", sans-serif; }
```
